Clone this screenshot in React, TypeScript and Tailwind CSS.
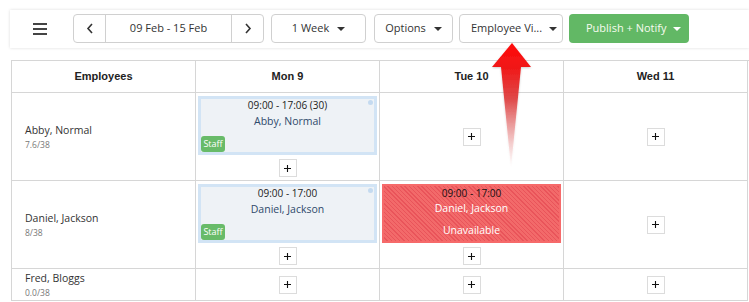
import React from "react";

const Caret = ({ white }: { white?: boolean }) => (
  <span
    className={
      "inline-block w-0 h-0 border-l-[4px] border-r-[4px] border-t-[4px] border-l-transparent border-r-transparent " +
      (white ? "border-t-white" : "border-t-[#333]")
    }
  />
);

const Plus = () => (
  <div className="w-[18px] h-[18px] border border-[#dcdcdc] bg-white flex items-center justify-center">
    <svg width="7" height="7" viewBox="0 0 7 7">
      <path d="M3.5 0V7M0 3.5H7" stroke="#111" strokeWidth="1.1" />
    </svg>
  </div>
);

const StaffCard = ({ time, name }: { time: string; name: string }) => (
  <div className="relative w-full h-[59px] border-[3px] border-[#d2e4f5] bg-[#eef2f6] flex flex-col items-center">
    <div className="absolute top-[1px] right-[1px] w-[5px] h-[5px] rounded-full bg-[#c4daf0]" />
    <div className="text-[10px] leading-[12px] text-[#222]">{time}</div>
    <div className="mt-[3px] text-[10.5px] leading-[14px] text-[#2e4a6b]">{name}</div>
    <div className="mt-auto self-start h-[16px] w-[24px] rounded-[3px] bg-[#68bb69] text-white text-[9px] leading-[16px] text-center">
      Staff
    </div>
  </div>
);

const Emp = ({ name, hrs }: { name: string; hrs: string }) => (
  <div className="flex flex-col justify-center pl-[13px]">
    <div className="text-[10.5px] leading-[16px] text-[#333]">{name}</div>
    <div className="mt-[1px] text-[8.5px] leading-[12px] text-[#777]">{hrs}</div>
  </div>
);

const cell = "border-r border-b border-[#d6d6d6]";

export default function App() {
  return (
    <div className="relative w-[749px] h-[302px] overflow-hidden bg-white font-['Open_Sans',sans-serif]">
      {/* top bar */}
      <div className="ml-[10px] mt-[10px] h-[38px] bg-white shadow-[0_0_3px_rgba(0,0,0,0.14)] flex items-start pt-[4px]">
        <div className="ml-[23px] mt-[9px] flex flex-col gap-[3px]">
          <div className="w-[14px] h-[2px] bg-[#444]" />
          <div className="w-[14px] h-[2px] bg-[#444]" />
          <div className="w-[14px] h-[2px] bg-[#444]" />
        </div>
        <div className="ml-[26px] h-[29px] flex border border-[#d0d0d0] rounded-[4px] text-[11px] text-[#333]">
          <div className="w-[32px] flex items-center justify-center border-r border-[#d0d0d0]">
            <svg width="8" height="11" viewBox="0 0 8 11">
              <path d="M6 1L2 5.5L6 10" stroke="#333" strokeWidth="1.6" fill="none" />
            </svg>
          </div>
          <div className="w-[126px] flex items-center justify-center border-r border-[#d0d0d0]">09 Feb - 15 Feb</div>
          <div className="w-[31px] flex items-center justify-center">
            <svg width="8" height="11" viewBox="0 0 8 11">
              <path d="M2 1L6 5.5L2 10" stroke="#333" strokeWidth="1.6" fill="none" />
            </svg>
          </div>
        </div>
        <div className="ml-[7px] w-[95px] h-[29px] flex items-center justify-center gap-[8px] border border-[#d0d0d0] rounded-[4px] text-[11px] text-[#333]">
          <span>1 Week</span>
          <Caret />
        </div>
        <div className="ml-[8px] w-[79px] h-[29px] flex items-center justify-center gap-[8px] border border-[#d0d0d0] rounded-[4px] text-[11px] text-[#333]">
          <span>Options</span>
          <Caret />
        </div>
        <div className="ml-[6px] w-[104px] h-[29px] flex items-center justify-between pl-[11px] pr-[5px] border border-[#d0d0d0] rounded-[4px] text-[11px] text-[#333]">
          <span>Employee Vi...</span>
          <Caret />
        </div>
        <div className="ml-[6px] w-[120px] h-[29px] flex items-center pl-[17px] gap-[7px] rounded-[4px] bg-[#62b865] text-[11px] text-[#f7fbef]">
          <span>Publish + Notify</span>
          <Caret white />
        </div>
      </div>

      {/* table */}
      <div className="ml-[11px] mt-[12px] grid grid-cols-[184px_184px_184px_184px] border-l border-t border-[#d6d6d6] font-['Liberation_Sans',sans-serif]">
        {["Employees", "Mon 9", "Tue 10", "Wed 11"].map((h) => (
          <div key={h} className={cell + " h-[32px] flex items-center justify-center text-[11px] font-bold text-[#222]"}>
            {h}
          </div>
        ))}

        {/* row 1 */}
        <div className={cell + " h-[88px] flex font-['Open_Sans',sans-serif]"}>
          <Emp name="Abby, Normal" hrs="7.6/38" />
        </div>
        <div className={cell + " h-[88px] flex flex-col items-center pt-[3px] px-[2px] font-['Open_Sans',sans-serif]"}>
          <StaffCard time="09:00 - 17:06 (30)" name="Abby, Normal" />
          <div className="mt-[4px]">
            <Plus />
          </div>
        </div>
        <div className={cell + " h-[88px] flex items-center justify-center"}>
          <Plus />
        </div>
        <div className={cell + " h-[88px] flex items-center justify-center"}>
          <Plus />
        </div>

        {/* row 2 */}
        <div className={cell + " h-[88px] flex font-['Open_Sans',sans-serif]"}>
          <Emp name="Daniel, Jackson" hrs="8/38" />
        </div>
        <div className={cell + " h-[88px] flex flex-col items-center pt-[3px] px-[2px] font-['Open_Sans',sans-serif]"}>
          <StaffCard time="09:00 - 17:00" name="Daniel, Jackson" />
          <div className="mt-[4px]">
            <Plus />
          </div>
        </div>
        <div className={cell + " h-[88px] flex flex-col items-center pt-[3px] px-[2px] font-['Open_Sans',sans-serif]"}>
          <div className="w-full h-[59px] border-[2px] border-[#f66a6a] bg-[image:repeating-linear-gradient(45deg,#f26a6a_0px,#f26a6a_2px,#e9545a_2px,#e9545a_3px)] flex flex-col items-center">
            <div className="mt-[1px] text-[10px] leading-[12px] text-[#111]">09:00 - 17:00</div>
            <div className="mt-[2px] text-[10.5px] leading-[14px] text-white">Daniel, Jackson</div>
            <div className="mt-[8px] text-[10.5px] leading-[14px] text-white">Unavailable</div>
          </div>
          <div className="mt-[4px]">
            <Plus />
          </div>
        </div>
        <div className={cell + " h-[88px] flex items-center justify-center"}>
          <Plus />
        </div>

        {/* row 3 */}
        <div className={cell + " h-[32px] flex font-['Open_Sans',sans-serif]"}>
          <Emp name="Fred, Bloggs" hrs="0.0/38" />
        </div>
        <div className={cell + " h-[32px] flex items-center justify-center"}>
          <Plus />
        </div>
        <div className={cell + " h-[32px] flex items-center justify-center"}>
          <Plus />
        </div>
        <div className={cell + " h-[32px] flex items-center justify-center"}>
          <Plus />
        </div>
      </div>

      {/* red arrow annotation */}
      <svg className="absolute left-[486px] top-[40px] pointer-events-none" width="52" height="132" viewBox="0 0 52 132">
        <defs>
          <linearGradient id="ag" x1="0" y1="0" x2="0" y2="1">
            <stop offset="0" stopColor="#ff0a0a" stopOpacity="1" />
            <stop offset="0.2" stopColor="#f01818" stopOpacity="1" />
            <stop offset="0.45" stopColor="#de3a3a" stopOpacity="0.9" />
            <stop offset="1" stopColor="#f4a0a0" stopOpacity="0" />
          </linearGradient>
          <filter id="sh" x="-30%" y="-10%" width="160%" height="120%">
            <feDropShadow dx="0" dy="1" stdDeviation="1" floodColor="#000" floodOpacity="0.2" />
          </filter>
        </defs>
        <path d="M26 3 L45 27 L35 27 L25 128 L15 27 L6 27 Z" fill="url(#ag)" filter="url(#sh)" />
      </svg>
    </div>
  );
}
